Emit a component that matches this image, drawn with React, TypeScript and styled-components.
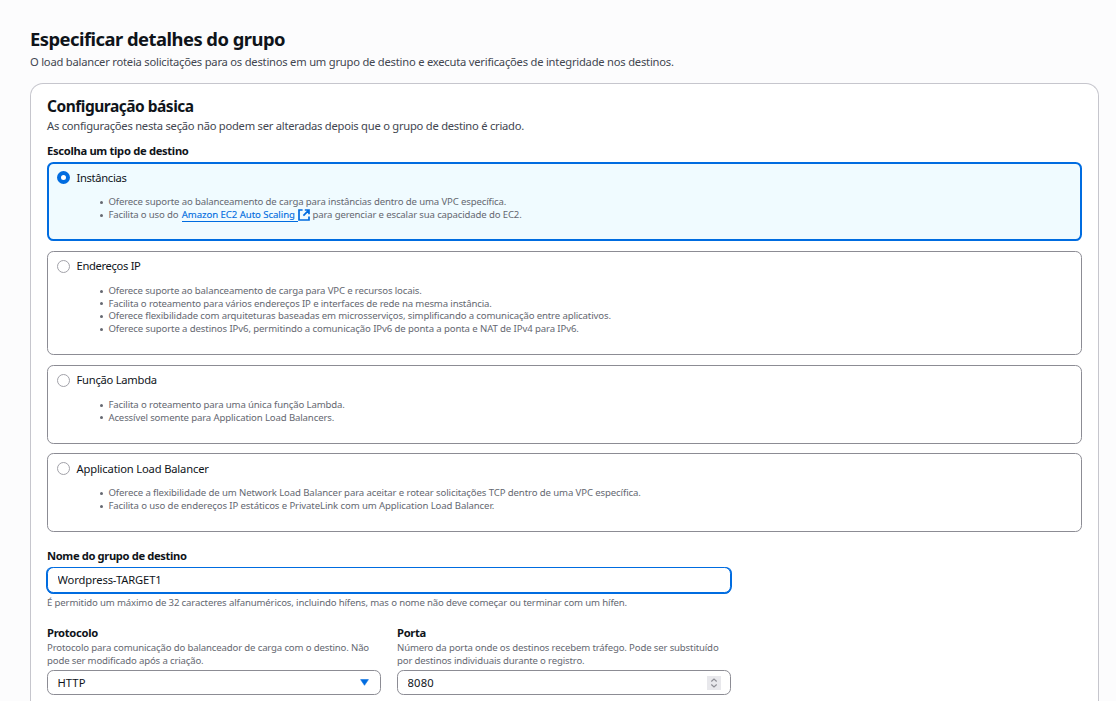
import React, { useState } from 'react';
import styled, { createGlobalStyle, css } from 'styled-components';

const GlobalStyle = createGlobalStyle`
  *, *::before, *::after { box-sizing: border-box; }
  html, body { margin: 0; height: 100%; overflow: hidden; }
  body {
    background: #fcfcfd;
    color: #0f141a;
    font: 11.2px/16px "Noto Sans", "Open Sans", sans-serif;
  }
`;

const Page = styled.main`
  display: flex;
  flex-direction: column;
  height: 100vh;
  padding: 27px 17px 0 30px;
`;

const PageTitle = styled.h1`
  margin: 0;
  font-size: 18.4px;
  line-height: 24px;
  font-weight: 700;
  letter-spacing: -0.52px;
`;

const Lead = styled.p<{ $spacing: number }>`
  margin: 0;
  color: #424650;
  line-height: 16px;
  letter-spacing: ${p => p.$spacing}px;
`;

const PageLead = styled(Lead)`
  margin-top: 3px;
`;

const Panel = styled.section`
  flex: 1;
  min-height: 0;
  margin-top: 13px;
  padding: 12px 16px 0;
  border: 1px solid #c6c6cd;
  border-bottom: 0;
  border-radius: 13px 13px 0 0;
  background: #fff;
`;

const PanelTitle = styled.h2`
  margin: 0 0 2px;
  font-size: 15.5px;
  line-height: 20px;
  font-weight: 700;
  letter-spacing: -0.49px;
`;

const FieldLabel = styled.label<{ $spacing?: number }>`
  display: block;
  font-weight: 700;
  line-height: 16px;
  letter-spacing: ${p => p.$spacing ?? -0.31}px;
`;

const TileGroup = styled.div`
  display: flex;
  flex-direction: column;
  gap: 9.6px;
  margin: 9px 0 16px;
`;

const TileHeading = styled(FieldLabel)`
  margin-bottom: -6.2px;
`;

const Tile = styled.div<{ $selected: boolean; $rows: number }>`
  display: grid;
  grid-template-columns: 13px 1fr;
  column-gap: 6.5px;
  align-content: start;
  height: ${p => 53.2 + p.$rows * 12.8}px;
  padding: 7px 9px;
  border: 1px solid #8c8c94;
  border-radius: 6.4px;
  cursor: pointer;
  ${p => p.$selected && css`
    padding: 6px 8px;
    border: 2px solid #006ce0;
    background: #f0fbff;
  `}
`;

const Radio = styled.span<{ $selected: boolean }>`
  width: 13px;
  height: 13px;
  margin-top: 1px;
  border: 1px solid #a2a2a9;
  border-radius: 50%;
  background: #fff;
  ${p => p.$selected && css`border: 4px solid #006ce0;`}
`;

const TileLabel = styled.span<{ $spacing: number }>`
  margin-top: -0.4px;
  line-height: 16px;
  letter-spacing: ${p => p.$spacing}px;
`;

const BulletList = styled.ul`
  grid-column: 2;
  margin: 10.4px 0 0;
  padding: 0 0 0 32px;
  list-style: none;
  color: #656871;
  font-size: 9.6px;
  line-height: 12.8px;
`;

const Bullet = styled.li<{ $spacing: number }>`
  display: flex;
  align-items: center;
  height: 12.8px;
  margin-left: -8.5px;
  white-space: pre;
  letter-spacing: ${p => p.$spacing}px;
  &::before {
    content: "";
    width: 3px;
    height: 3px;
    margin: 0 5.4px 0 0;
    border-radius: 50%;
    background: #656871;
  }
`;

const ExternalLink = styled.a`
  display: inline-flex;
  align-items: center;
  margin: 0 2.6px 0 3.3px;
  color: #006ce0;
  letter-spacing: -0.06px;
  text-decoration: none;
  -webkit-text-stroke: 0.1px #006ce0;
`;

const LinkText = styled.span`
  height: 13px;
  padding-right: 3px;
  line-height: 12.8px;
  border-bottom: 1px solid #006ce0;
`;

const FormGrid = styled.div`
  display: grid;
  grid-template-columns: 334px 334px;
  column-gap: 16px;
`;

const Field = styled.div<{ $wide?: boolean }>`
  grid-column: ${p => (p.$wide ? '1 / -1' : 'auto')};
`;

const HelpText = styled.div<{ $spacing: number }>`
  color: #656871;
  font-size: 9.6px;
  line-height: 12.8px;
  white-space: nowrap;
  letter-spacing: ${p => p.$spacing}px;
`;

const Control = styled.div<{ $focused?: boolean }>`
  display: flex;
  align-items: center;
  justify-content: space-between;
  height: 25px;
  padding: 1px 9px 0 9.5px;
  border: 1px solid #8c8c94;
  border-radius: 6.4px;
  background: #fff;
  ${p => p.$focused && css`
    height: 26px;
    margin: 3px 0 4.2px;
    padding-top: 0;
    border-color: #006ce0;
    box-shadow: 1px 0 #006ce0, -1px 0 #006ce0, 0 1px #006ce0;
  `}
`;

const Input = styled.input<{ $spacing: number }>`
  flex: 1;
  min-width: 0;
  padding: 0;
  border: 0;
  outline: 0;
  background: transparent;
  color: #0f141a;
  font: inherit;
  letter-spacing: ${p => p.$spacing}px;
`;

const NumberStepper = styled.span`
  display: flex;
  align-items: center;
  justify-content: center;
  width: 14px;
  height: 14px;
  background: #e8e8ec;
`;

const SelectValue = styled.span`
  letter-spacing: 0.07px;
`;

const Helps = styled.div`
  margin: 0.6px 0 2.4px;
`;

const FirstRow = styled(Field)`
  margin-bottom: 15.4px;
`;

const Caret = styled.svg`
  margin-right: 2px;
`;

const LinkIcon = styled.svg`
  margin-top: -1px;
`;

const ExternalIcon = () => (
  <LinkIcon width="12" height="12" viewBox="0 0 12 12" fill="none" stroke="#006ce0" strokeWidth="1.7">
    <path d="M4.6 1H1v10h10V7.6M6.8 1H11v4.2M10.8 1.2 5.4 6.6" />
  </LinkIcon>
);

const CaretIcon = () => (
  <Caret width="9" height="7" viewBox="0 0 9 7">
    <path d="M0.6 0.6h7.8L4.5 6.3z" fill="#006ce0" stroke="#006ce0" strokeWidth="0.6" strokeLinejoin="round" />
  </Caret>
);

const StepperIcon = () => (
  <svg width="8" height="10" viewBox="0 0 8 10" fill="none" stroke="#8f8f96" strokeWidth="1.2">
    <path d="M1.3 3.5 4 1l2.7 2.5M1.3 6.5 4 9l2.7-2.5" />
  </svg>
);

type Line = { spacing: number; text: React.ReactNode };
type Option = { id: string; label: string; spacing: number; lines: Line[] };

const options: Option[] = [
  {
    id: 'instance', label: 'Instâncias', spacing: -0.32,
    lines: [
      { spacing: -0.135, text: 'Oferece suporte ao balanceamento de carga para instâncias dentro de uma VPC específica.' },
      {
        spacing: -0.145,
        text: (
          <>
            <span>Facilita o uso do</span>
            <ExternalLink href="#"><LinkText>Amazon EC2 Auto Scaling</LinkText><ExternalIcon /></ExternalLink>
            <span>para gerenciar e escalar sua capacidade do EC2.</span>
          </>
        ),
      },
    ],
  },
  {
    id: 'ip', label: 'Endereços IP', spacing: -0.33,
    lines: [
      { spacing: -0.143, text: 'Oferece suporte ao balanceamento de carga para VPC e recursos locais.' },
      { spacing: -0.14, text: 'Facilita o roteamento para vários endereços IP e interfaces de rede na mesma instância.' },
      { spacing: -0.132, text: 'Oferece flexibilidade com arquiteturas baseadas em microsserviços, simplificando a comunicação entre aplicativos.' },
      { spacing: -0.11, text: 'Oferece suporte a destinos IPv6, permitindo a comunicação IPv6 de ponta a ponta e NAT de IPv4 para IPv6.' },
    ],
  },
  {
    id: 'lambda', label: 'Função Lambda', spacing: -0.25,
    lines: [
      { spacing: -0.13, text: 'Facilita o roteamento para uma única função Lambda.' },
      { spacing: -0.13, text: 'Acessível somente para Application Load Balancers.' },
    ],
  },
  {
    id: 'alb', label: 'Application Load Balancer', spacing: -0.17,
    lines: [
      { spacing: -0.111, text: 'Oferece a flexibilidade de um Network Load Balancer para aceitar e rotear solicitações TCP dentro de uma VPC específica.' },
      { spacing: -0.11, text: 'Facilita o uso de endereços IP estáticos e PrivateLink com um Application Load Balancer.' },
    ],
  },
];

export default function App() {
  const [target, setTarget] = useState('instance');
  const [name, setName] = useState('Wordpress-TARGET1');
  const [port, setPort] = useState('8080');

  return (
    <>
      <GlobalStyle />
      <Page>
        <PageTitle>Especificar detalhes do grupo</PageTitle>
        <PageLead $spacing={-0.22}>
          O load balancer roteia solicitações para os destinos em um grupo de destino e executa verificações de integridade nos destinos.
        </PageLead>
        <Panel>
          <PanelTitle>Configuração básica</PanelTitle>
          <Lead $spacing={-0.249}>
            As configurações nesta seção não podem ser alteradas depois que o grupo de destino é criado.
          </Lead>
          <TileGroup role="radiogroup">
            <TileHeading as="div">Escolha um tipo de destino</TileHeading>
            {options.map(o => (
              <Tile key={o.id} $selected={o.id === target} $rows={o.lines.length} onClick={() => setTarget(o.id)}>
                <Radio $selected={o.id === target} role="radio" aria-checked={o.id === target} />
                <TileLabel $spacing={o.spacing}>{o.label}</TileLabel>
                <BulletList>
                  {o.lines.map((l, i) => <Bullet key={i} $spacing={l.spacing}>{l.text}</Bullet>)}
                </BulletList>
              </Tile>
            ))}
          </TileGroup>
          <FormGrid>
            <FirstRow $wide>
              <FieldLabel $spacing={-0.369}>Nome do grupo de destino</FieldLabel>
              <Control $focused>
                <Input $spacing={-0.13} value={name} onChange={e => setName(e.target.value)} />
              </Control>
              <HelpText $spacing={-0.141}>
                É permitido um máximo de 32 caracteres alfanuméricos, incluindo hífens, mas o nome não deve começar ou terminar com um hífen.
              </HelpText>
            </FirstRow>
            <Field>
              <FieldLabel>Protocolo</FieldLabel>
              <Helps>
                <HelpText $spacing={-0.149}>Protocolo para comunicação do balanceador de carga com o destino. Não</HelpText>
                <HelpText $spacing={-0.155}>pode ser modificado após a criação.</HelpText>
              </Helps>
              <Control>
                <SelectValue>HTTP</SelectValue>
                <CaretIcon />
              </Control>
            </Field>
            <Field>
              <FieldLabel>Porta</FieldLabel>
              <Helps>
                <HelpText $spacing={-0.15}>Número da porta onde os destinos recebem tráfego. Pode ser substituído</HelpText>
                <HelpText $spacing={-0.149}>por destinos individuais durante o registro.</HelpText>
              </Helps>
              <Control>
                <Input $spacing={0.22} value={port} onChange={e => setPort(e.target.value)} />
                <NumberStepper><StepperIcon /></NumberStepper>
              </Control>
            </Field>
          </FormGrid>
        </Panel>
      </Page>
    </>
  );
}
